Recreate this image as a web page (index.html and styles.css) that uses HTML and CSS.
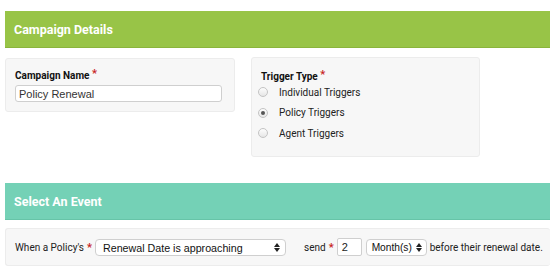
FILE: index.html
```html
<!DOCTYPE html>
<html lang="en">
<head>
    <meta charset="UTF-8">
    <title>Campaign</title>
    <link rel="stylesheet" href="styles.css">
</head>
<body>

    <div class="panel-head green">Campaign Details</div>

    <div class="details">
        <div class="card name-card">
            <div class="label">Campaign Name <span class="req">*</span></div>
            <input class="text-input" type="text" value="Policy Renewal">
        </div>

        <div class="card trigger-card">
            <div class="label">Trigger Type <span class="req">*</span></div>
            <label class="radio"><span class="dot"></span>Individual Triggers</label>
            <label class="radio"><span class="dot checked"></span>Policy Triggers</label>
            <label class="radio"><span class="dot"></span>Agent Triggers</label>
        </div>
    </div>

    <div class="panel-head teal">Select An Event</div>

    <div class="card event-card">
        <span>When a Policy's</span>
        <span class="req">*</span>
        <div class="select event-select">Renewal Date is approaching<span class="arrows"></span></div>
        <span class="send">send</span>
        <span class="req">*</span>
        <div class="num-input">2</div>
        <div class="select unit-select">Month(s)<span class="arrows"></span></div>
        <span>before their renewal date.</span>
    </div>

</body>
</html>
```

FILE: styles.css
```css
body {
    margin: 0;
    padding: 11px 0 0 5px;
    background: #fff;
    font-family: Roboto, Lato, sans-serif;
    color: #222;
    overflow: hidden;
}

.panel-head {
    height: 36px;
    line-height: 37px;
    padding-left: 9px;
    color: #fff;
    font-size: 12.5px;
    font-weight: 700;
}

.green {
    background: #98c447;
    border-bottom: 1px solid #8ab43c;
}

.teal {
    background: #74d1b6;
    border-bottom: 1px solid #67c4a8;
}

.details {
    display: flex;
    align-items: flex-start;
    gap: 16px;
    margin-top: 9px;
    margin-bottom: 26px;
}

.card {
    background: #f7f7f7;
    border: 1px solid #ececec;
    border-radius: 3px;
    box-sizing: border-box;
}

.name-card {
    width: 230px;
    height: 54px;
    padding: 8px 12px 0 9px;
    margin-top: 1px;
}

.trigger-card {
    width: 229px;
    height: 100px;
    padding: 10px 9px 0 9px;
}

.label {
    font-size: 10px;
    font-weight: 700;
    color: #111;
    margin-bottom: 4px;
    white-space: nowrap;
}

.req {
    color: #c81e1e;
    font-weight: 700;
    font-size: 11px;
    vertical-align: 2px;
}

.text-input {
    display: block;
    width: 100%;
    height: 17px;
    box-sizing: border-box;
    margin: 0;
    border: 1px solid #cfcfcf;
    border-radius: 3px;
    padding: 0 3px;
    font-family: 'Liberation Sans', Arial, sans-serif;
    font-size: 11px;
    color: #333;
    background: #fff;
}

.trigger-card .label {
    margin-bottom: 0;
}

.radio {
    display: flex;
    align-items: center;
    height: 20.5px;
    font-size: 10px;
    color: #222;
}

.dot {
    width: 8px;
    height: 8px;
    border-radius: 50%;
    border: 1px solid #c4c4c4;
    background: linear-gradient(#fdfdfd, #e6e6e6);
    margin: 0 11px 0 -3px;
    position: relative;
}

.dot.checked::after {
    content: "";
    position: absolute;
    left: 2px;
    top: 2px;
    width: 4px;
    height: 4px;
    border-radius: 50%;
    background: #555;
}

.event-card {
    display: flex;
    align-items: center;
    height: 38px;
    margin-top: 8px;
    padding-left: 9px;
    font-size: 10px;
    color: #222;
    border-right: none;
    white-space: nowrap;
}

.event-card > * {
    flex-shrink: 0;
}

.event-card .req {
    margin: 0 3px 0 3px;
}

.select {
    position: relative;
    height: 17px;
    line-height: 16px;
    box-sizing: border-box;
    border: 1px solid #cfcfcf;
    border-radius: 4px;
    background: #fff;
    font-family: 'Liberation Sans', Arial, sans-serif;
    font-size: 10.7px;
    color: #111;
    padding-left: 7px;
}

.arrows {
    position: absolute;
    right: 5px;
    top: 3px;
    width: 0;
    height: 0;
    border-left: 3px solid transparent;
    border-right: 3px solid transparent;
    border-bottom: 4px solid #222;
}

.arrows::after {
    content: "";
    position: absolute;
    left: -3px;
    top: 5px;
    border-left: 3px solid transparent;
    border-right: 3px solid transparent;
    border-top: 4px solid #222;
}

.event-select {
    width: 191px;
}

.send {
    margin-left: 18px;
}

.num-input {
    width: 25px;
    height: 18px;
    line-height: 17px;
    box-sizing: border-box;
    border: 1px solid #cfcfcf;
    border-radius: 2px;
    background: #fff;
    font-family: 'Liberation Sans', Arial, sans-serif;
    font-size: 11px;
    padding-left: 4px;
    margin-right: 4px;
}

.unit-select {
    width: 61px;
    margin-right: 3px;
    padding-left: 5px;
    font-size: 10.2px;
}

.unit-select .arrows {
    right: 4px;
}
```
